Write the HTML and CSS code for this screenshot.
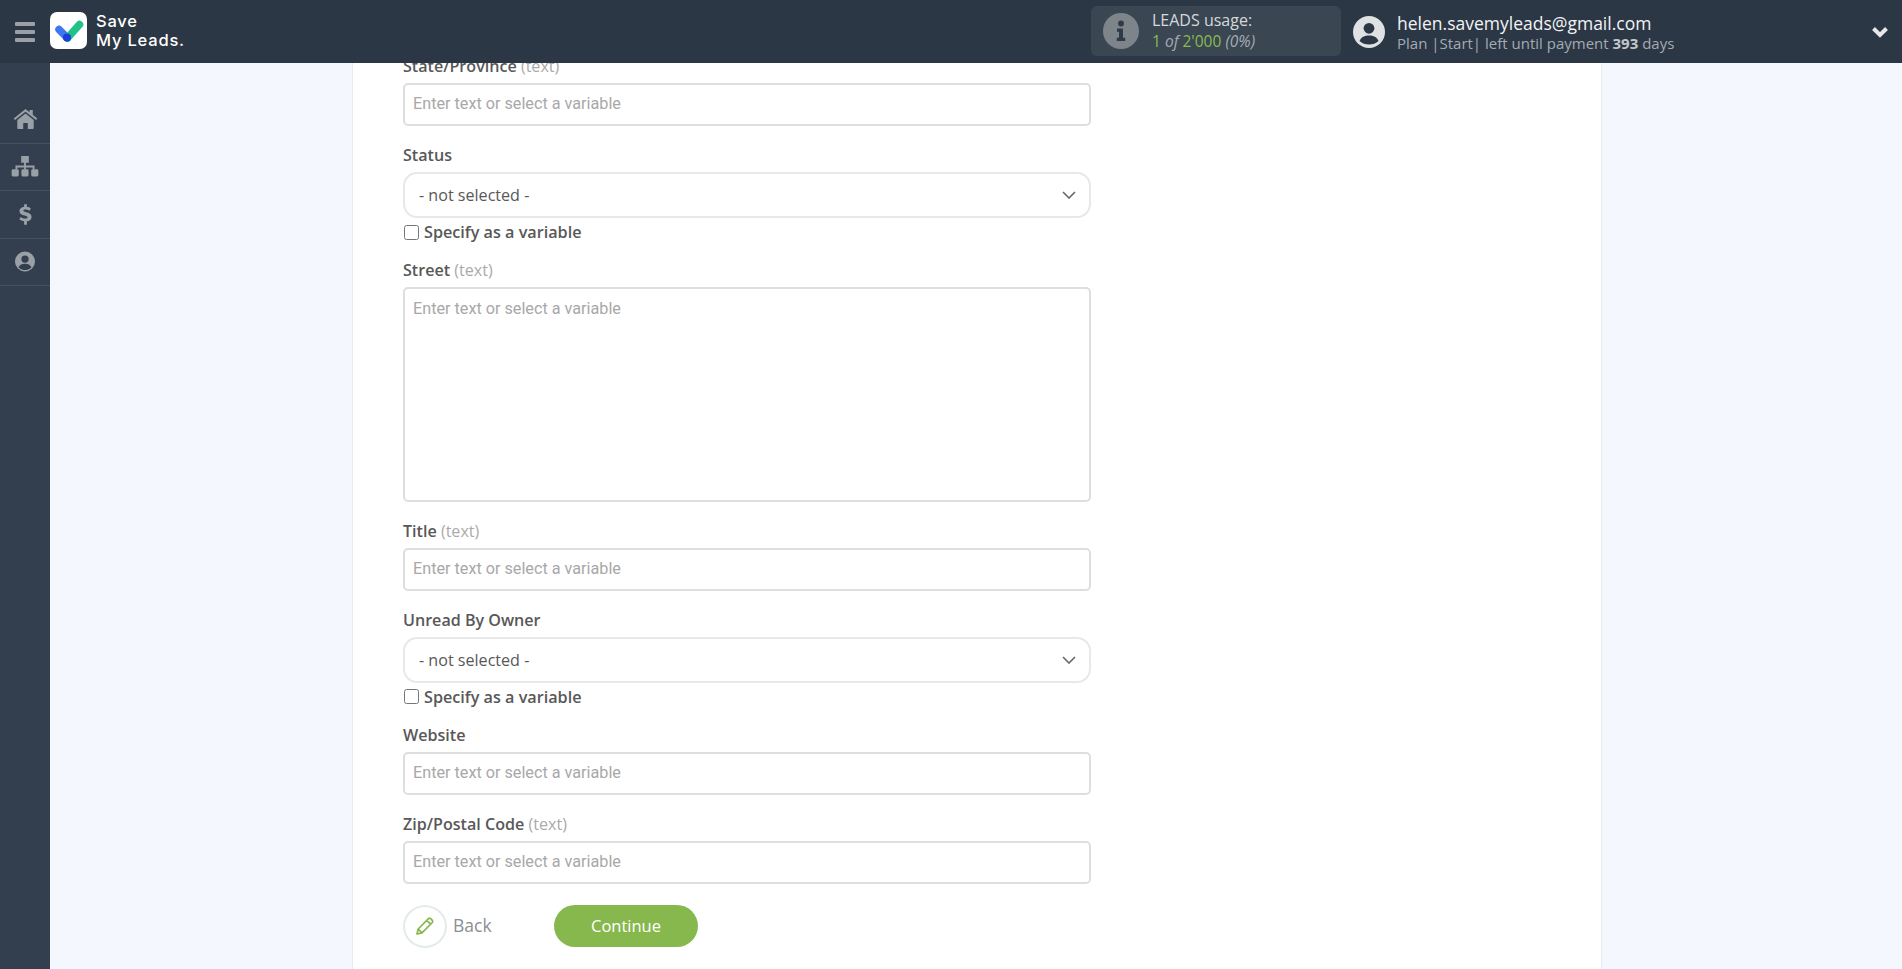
FILE: index.html
```html
<!DOCTYPE html>
<html lang="en">
<head>
<meta charset="utf-8">
<title>Save My Leads</title>
<link rel="stylesheet" href="styles.css">
</head>
<body>
<header class="topbar">
  <button class="burger" aria-label="Menu"><span></span><span></span><span></span></button>
  <div class="logo">
    <div class="logo-mark">
      <svg viewBox="0 0 37 37" width="37" height="37">
        <path d="M9 17.5 L17.5 26" stroke="#3f76f2" stroke-width="7.5" stroke-linecap="round" fill="none"/>
        <path d="M17.5 26 L29.5 12.5" stroke="#21c28a" stroke-width="7.5" stroke-linecap="round" fill="none"/>
        <circle cx="17" cy="25.5" r="4" fill="#1c3fd8"/>
      </svg>
    </div>
    <div class="logo-text">Save<br>My Leads.</div>
  </div>
  <div class="usage">
    <svg class="usage-icon" viewBox="0 0 36 36" width="36" height="36">
      <circle cx="18" cy="18" r="18" fill="#7d848a"/>
      <circle cx="18" cy="10.5" r="2.9" fill="#2f3a47"/>
      <path d="M14 15.5h6v9.2h2.2v3.3h-8.4v-3.3H16v-6h-2z" fill="#2f3a47"/>
    </svg>
    <div class="usage-text">
      <div class="usage-title">LEADS usage:</div>
      <div class="usage-count"><span class="green">1</span> <i>of</i> <span class="green">2'000</span> <i>(0%)</i></div>
    </div>
  </div>
  <div class="account">
    <svg class="avatar" viewBox="0 0 32 32" width="32" height="32">
      <circle cx="16" cy="16" r="16" fill="#dfe1e3"/>
      <circle cx="16" cy="12.3" r="5.4" fill="#2c3745"/>
      <path d="M6.5 25c1.5-4 5-5.6 9.5-5.6s8 1.6 9.5 5.6c-2.5 2.4-5.8 3.6-9.5 3.6S9 27.400 6.500 25z" fill="#2c3745"/>
    </svg>
    <div class="account-text">
      <div class="email">helen.savemyleads@gmail.com</div>
      <div class="plan">Plan |Start| left until payment <b>393</b> days</div>
    </div>
  </div>
  <svg class="caret" viewBox="0 0 18 12" width="18" height="12"><path d="M2.500 2.500 L9 9 L15.500 2.500" fill="none" stroke="#e6e8ea" stroke-width="4"/></svg>
</header>
<div class="layout">
  <nav class="sidebar">
    <a class="nav-item"><svg viewBox="0 0 26 22" width="25" height="20"><path d="M13 0 L17.500 3.600V1h3.500v5.400L26 10.500 24.600 12.200 13 2.900 1.400 12.200 0 10.500z" fill="#99a0a6"/><path d="M13 5 L22 12.200V21a1 1 0 0 1-1 1h-5.500v-6.500h-5V22H5a1 1 0 0 1-1-1v-8.800z" fill="#99a0a6"/></svg></a>
    <a class="nav-item"><svg viewBox="0 0 28 22" width="28" height="21"><path d="M10 0h8v7h-3v3h9v4h-2v-2h-7v2h-2v-2H6v2H4v-4h9V7h-3z" fill="#99a0a6"/><rect x="0" y="14" width="7.500" height="7.500" rx="1.500" fill="#99a0a6"/><rect x="10.250" y="14" width="7.500" height="7.500" rx="1.500" fill="#99a0a6"/><rect x="20.500" y="14" width="7.500" height="7.500" rx="1.500" fill="#99a0a6"/></svg></a>
    <a class="nav-item"><svg viewBox="0 0 14 22" width="13" height="21"><path d="M5.500 0h3v2.600c1.700.2 3 .8 4.300 1.700l-1.500 2.600C9.900 6 8.500 5.500 7 5.500c-1.500 0-2.300.5-2.300 1.300 0 .9.900 1.200 3 1.800 3.100.8 5.800 1.800 5.800 5 0 2.700-2 4.300-5 4.700V22h-3v-3.700c-2-.2-3.800-1-5.200-2.100l1.700-2.500c1.400 1 3 1.700 4.700 1.700 1.600 0 2.500-.5 2.500-1.500 0-.9-.9-1.300-3.100-1.900C2.600 11.200.5 10.100.5 7.100c0-2.400 1.900-4.100 5-4.500z" fill="#99a0a6"/></svg></a>
    <a class="nav-item"><svg viewBox="0 0 22 22" width="22" height="21"><circle cx="11" cy="11" r="10.500" fill="#99a0a6"/><circle cx="11" cy="8.500" r="3.800" fill="#333f4e"/><path d="M4.200 17c1.200-2.700 3.600-3.700 6.800-3.700s5.600 1 6.800 3.700c-1.700 1.900-4.100 3-6.800 3s-5.100-1.100-6.800-3z" fill="#333f4e"/></svg></a>
  </nav>
  <main class="content">
    <section class="card">
      <div class="field">
        <label class="label">State/Province <span class="hint">(text)</span></label>
        <input class="input" type="text" placeholder="Enter text or select a variable">
      </div>
      <div class="field">
        <label class="label">Status</label>
        <div class="select"><span>- not selected -</span><svg viewBox="0 0 14 8" width="14" height="8"><path d="M1 1 L7 7 L13 1" fill="none" stroke="#666" stroke-width="1.600"/></svg></div>
        <label class="check"><input type="checkbox"> Specify as a variable</label>
      </div>
      <div class="field">
        <label class="label">Street <span class="hint">(text)</span></label>
        <textarea class="input area" placeholder="Enter text or select a variable"></textarea>
      </div>
      <div class="field">
        <label class="label">Title <span class="hint">(text)</span></label>
        <input class="input" type="text" placeholder="Enter text or select a variable">
      </div>
      <div class="field">
        <label class="label">Unread By Owner</label>
        <div class="select"><span>- not selected -</span><svg viewBox="0 0 14 8" width="14" height="8"><path d="M1 1 L7 7 L13 1" fill="none" stroke="#666" stroke-width="1.600"/></svg></div>
        <label class="check"><input type="checkbox"> Specify as a variable</label>
      </div>
      <div class="field">
        <label class="label">Website</label>
        <input class="input" type="text" placeholder="Enter text or select a variable">
      </div>
      <div class="field">
        <label class="label">Zip/Postal Code <span class="hint">(text)</span></label>
        <input class="input" type="text" placeholder="Enter text or select a variable">
      </div>
      <div class="actions">
        <a class="back">
          <span class="back-circle"><svg viewBox="0 0 20 20" width="20" height="20"><path d="M2 18l1.200-5L13.500 2.700a1.500 1.500 0 0 1 2.100 0l1.700 1.700a1.500 1.500 0 0 1 0 2.100L7 16.800z M11.800 4.400l3.800 3.800 M3.200 13l3.800 3.800" fill="none" stroke="#86b84e" stroke-width="1.700" stroke-linejoin="round"/></svg></span>
          <span class="back-text">Back</span>
        </a>
        <button class="continue">Continue</button>
      </div>
    </section>
  </main>
</div>
</body>
</html>
```

FILE: styles.css
```css
* { box-sizing: border-box; }
html, body { height: 100%; }
body {
  margin: 0;
  height: 969px;
  overflow: hidden;
  display: flex;
  flex-direction: column;
  font-family: "Open Sans", sans-serif;
  background: #f4f7fd;
}
.topbar {
  height: 63px;
  flex: none;
  background: #2c3745;
  display: flex;
  align-items: center;
  position: relative;
  z-index: 2;
}
.burger {
  width: 50px;
  height: 63px;
  flex: none;
  padding: 0 15px;
  background: none;
  border: 0;
  display: flex;
  flex-direction: column;
  justify-content: center;
  gap: 4px;
}
.burger span { display: block; height: 4px; width: 20px; background: #9aa0a6; border-radius: 1px; }
.logo { display: flex; align-items: center; gap: 9px; width: 1041px; flex: none; margin-top: -2px; }
.logo-mark { width: 37px; height: 37px; border-radius: 7px; background: #fff; flex: none; }
.logo-mark svg { display: block; }
.logo-text { font-family: "Inter", sans-serif; font-weight: 500; font-size: 16.5px; line-height: 19px; color: #fff; letter-spacing: .8px; }
.usage {
  width: 250px;
  height: 50px;
  flex: none;
  background: #3a4652;
  border-radius: 6px;
  display: flex;
  align-items: center;
  padding-left: 12px;
  gap: 13px;
  margin-top: -1px;
}
.usage-icon { flex: none; }
.usage-title { font-size: 16px; line-height: 21px; color: #d5d9dc; }
.usage-count { font-size: 15.500px; line-height: 21px; color: #a5adb3; }
.green { color: #8bba50; }
.account { display: flex; align-items: center; margin-left: 12px; gap: 12px; flex: none; }
.avatar { flex: none; }
.account-text { padding-top: 2px; }
.email { font-size: 17.500px; line-height: 21px; color: #f2f3f4; }
.plan { font-size: 15px; line-height: 19px; color: #a3abb3; }
.plan b { font-weight: 700; color: #c2c7cc; }
.caret { flex: none; margin-left: auto; margin-right: 13px; }
.layout { flex: 1; display: flex; min-height: 0; }
.sidebar { width: 50px; flex: none; background: #333f4e; padding-top: 33px; }
.nav-item {
  display: flex;
  height: 47.500px;
  align-items: center;
  justify-content: center;
  border-bottom: 1px solid #46515e;
}
.content { flex: 1; min-width: 0; overflow: hidden; padding-left: 302px; }
.card {
  width: 1250px;
  min-height: calc(100% + 8px);
  margin-top: -8px;
  padding: 0 50px;
  background: #fff;
  border-left: 1px solid #e8ebf0;
  border-right: 1px solid #e8ebf0;
}
.field { width: 688px; margin-bottom: 18px; }
.label {
  display: block;
  height: 22.300px;
  padding-top: .3px;
  margin-bottom: 5.900px;
  font-size: 16.100px;
  line-height: 22px;
  font-weight: 600;
  color: #585858;
}
.hint { font-weight: 400; color: #aaa; }
.input {
  display: block;
  width: 100%;
  height: 43px;
  padding: 0 8px 2px;
  border: 2px solid #dedede;
  border-radius: 5px;
  font-family: "Roboto", sans-serif;
  font-size: 16.200px;
  color: #555;
  background: #fff;
  outline: none;
}
.input::placeholder { color: #a8a8a8; opacity: 1; }
.area { height: 214.600px; margin-bottom: -.6px; padding-top: 10px; resize: none; }
.select {
  height: 46px;
  border: 2px solid #e8e8e8;
  border-radius: 14px;
  padding: 0 13px 0 14px;
  display: flex;
  align-items: center;
  justify-content: space-between;
  font-size: 16.100px;
  color: #585858;
}
.check {
  display: flex;
  align-items: center;
  gap: 5px;
  height: 22px;
  margin: 3px 0 -2.200px;
  font-size: 16.200px;
  font-weight: 600;
  color: #585858;
}
.check input { margin: 0 0 0 1px; width: 15px; height: 15px; }
.actions { display: flex; align-items: center; gap: 62px; margin-top: 21px; padding-bottom: 20px; }
.back { display: flex; align-items: center; gap: 6px; font-size: 17.500px; color: #8a8f94; width: 89px; white-space: nowrap; }
.back-text { padding-bottom: 2px; }
.back-circle {
  width: 44px;
  height: 43px;
  flex: none;
  border: 2px solid #e2ebe6;
  border-radius: 50%;
  display: flex;
  align-items: center;
  justify-content: center;
}
.continue {
  width: 144px;
  height: 42px;
  border: 0;
  padding: 0 0 2px;
  border-radius: 21px;
  background: #86b84e;
  color: #fff;
  font-family: "Open Sans", sans-serif;
  font-size: 16.500px;
}
```
